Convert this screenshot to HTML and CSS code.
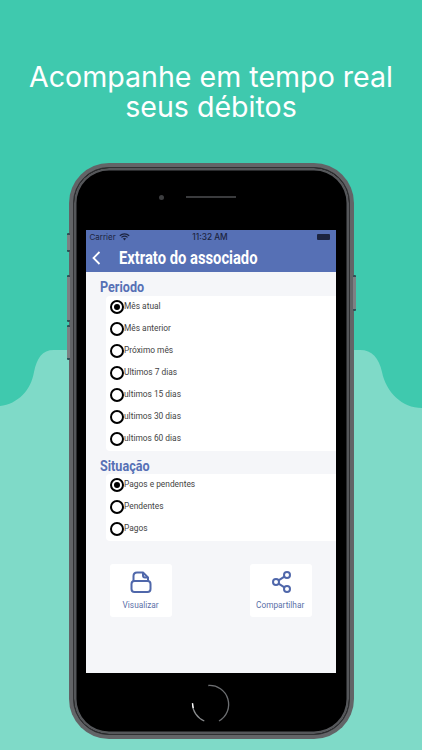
FILE: index.html
```html
<!DOCTYPE html>
<html lang="pt">
<head>
  <meta charset="utf-8">
  <title>Extrato do associado</title>
  <link rel="stylesheet" href="styles.css">
</head>
<body>
  <div class="page">
    <!-- fundo com a onda -->
    <svg class="wave" width="422" height="750" viewBox="0 0 422 750">
      <path fill="#7fdac8" d="M0 406C18 404 31 390 34 372C37 358 42 350 54 350L360 350C372 350 379 358 382 372C386 392 402 408 422 408L422 750L0 750Z"/>
    </svg>

    <h1 class="headline">Acompanhe em tempo real<br>seus débitos</h1>

    <div class="phone">
      <span class="side side-a"></span>
      <span class="side side-b"></span>
      <span class="side side-c"></span>
      <span class="side side-d"></span>

      <div class="bezel">
        <div class="speaker-row">
          <span class="camera"></span>
          <span class="speaker"></span>
        </div>

        <div class="screen">
          <div class="statusbar">
            <span class="carrier">Carrier
              <svg width="11" height="8" viewBox="0 0 11 8"><path fill="none" stroke="#1c2440" stroke-width="1.2" d="M.8 2.8C3.500.3 7.500.3 10.200 2.800M2.400 4.400C4.200 2.900 6.800 2.900 8.600 4.400"/><path fill="#1c2440" d="M3.900 5.600C4.800 4.900 6.200 4.900 7.100 5.600L5.500 7.500Z"/></svg>
            </span>
            <span class="clock">11:32 AM</span>
            <span class="battery"></span>
          </div>
          <div class="navbar">
            <svg class="back" width="9" height="14" viewBox="0 0 9 14"><path fill="none" stroke="#fff" stroke-width="1.8" d="M7.500 1L1.500 7L7.500 13"/></svg>
            <span class="title">Extrato do associado</span>
          </div>

          <div class="section-title">Periodo</div>
          <ul class="options">
            <li class="checked"><i class="radio"></i><span>Mês atual</span></li>
            <li><i class="radio"></i><span>Mês anterior</span></li>
            <li><i class="radio"></i><span>Próximo mês</span></li>
            <li><i class="radio"></i><span>Ultimos 7 dias</span></li>
            <li><i class="radio"></i><span>ultimos 15 dias</span></li>
            <li><i class="radio"></i><span>ultimos 30 dias</span></li>
            <li><i class="radio"></i><span>ultimos 60 dias</span></li>
          </ul>

          <div class="section-title">Situação</div>
          <ul class="options">
            <li class="checked"><i class="radio"></i><span>Pagos e pendentes</span></li>
            <li><i class="radio"></i><span>Pendentes</span></li>
            <li><i class="radio"></i><span>Pagos</span></li>
          </ul>

          <div class="actions">
            <div class="action">
              <svg width="22" height="22" viewBox="0 0 22 22" fill="none" stroke="#4f67aa" stroke-width="2" stroke-linejoin="round"><path d="M3.500 10V5Q3.500 1.500 7 1.500H13L18 6.500V10"/><path d="M13 1.500V4.500Q13 6.500 15 6.500H18"/><rect x="1.500" y="10" width="19" height="11" rx="3"/></svg>
              <span>Visualizar</span>
            </div>
            <div class="action">
              <svg width="22" height="22" viewBox="0 0 22 22" fill="none" stroke="#4f67aa" stroke-width="2"><circle cx="17" cy="4" r="3"/><circle cx="6" cy="11" r="3"/><circle cx="17" cy="18" r="3"/><path d="M8.600 9.400L14.400 5.700M8.600 12.600L14.400 16.300"/></svg>
              <span>Compartilhar</span>
            </div>
          </div>
        </div>

        <div class="home-row">
          <svg width="44" height="44" viewBox="0 0 44 44" fill="none" stroke-width="1.300">
            <path stroke="#6d6f72" d="M19.300 3.500A19 19 0 0 1 30 39"/>
            <path stroke="#8a8c8e" d="M3.500 21.300A19 19 0 0 0 15.300 39"/>
            <path stroke="#fff" d="M3.500 21.300A19 19 0 0 0 4.300 26"/>
          </svg>
        </div>
      </div>
    </div>
  </div>
</body>
</html>
```
FILE: styles.css
```css
* {
  margin: 0;
  padding: 0;
  box-sizing: border-box;
}

body {
  background-color: #3fc9ae;
  font-family: "Roboto", sans-serif;
}

.page {
  position: relative;
  width: 422px;
  height: 750px;
  overflow: hidden;
  padding-top: 62px;
}

.wave {
  position: absolute;
  left: 0;
  top: 0;
}

/* Titulo */

.headline {
  position: relative;
  color: #fff;
  font-family: "Inter", sans-serif;
  font-size: 28.600px;
  font-weight: 400;
  line-height: 30px;
  text-align: center;
}

/* Aparelho */

.phone {
  position: relative;
  width: 285px;
  height: 576px;
  margin: 41px 0 0 69px;
  padding: 4px;
  background-color: #626467;
  border-radius: 40px;
}

.side {
  position: absolute;
  width: 3px;
  background-color: #7d8083;
  border-top: 2px solid #2f4f55;
  border-bottom: 2px solid #2f4f55;
  border-radius: 1px;
}

.side-a { left: -2px; top: 70px; height: 19px; }
.side-b { left: -2px; top: 112px; height: 47px; }
.side-c { left: -2px; top: 162px; height: 35px; }
.side-d { right: -2px; top: 112px; height: 36px; }

.bezel {
  height: 568px;
  padding: 0 11.500px;
  background-color: #000;
  border: 1.500px solid #2f3032;
  border-radius: 36px;
  box-shadow: inset 0 0 0 2.500px #55575a;
}

.speaker-row {
  display: flex;
  align-items: center;
  gap: 22px;
  height: 61.500px;
  padding: 0 0 3px 73px;
}

.camera {
  width: 5px;
  height: 5px;
  background-color: #3c3d3f;
  border-radius: 50%;
}

.speaker {
  width: 50px;
  height: 2px;
  background-color: #3a3b3d;
}

/* Tela */

.screen {
  width: 250px;
  height: 443px;
  background-color: #f5f6f9;
}

.statusbar {
  display: flex;
  align-items: center;
  justify-content: space-between;
  height: 14px;
  padding: 0 5px 0 4px;
  background-color: #5670b5;
  color: #1c2440;
  font-family: "Inter", sans-serif;
  font-size: 8px;
}

.carrier {
  display: flex;
  align-items: center;
  gap: 3px;
  width: 60px;
}

.clock {
  font-size: 8.300px;
  font-weight: 500;
}

.battery {
  display: block;
  width: 13px;
  height: 6px;
  margin-left: 47px;
  background-color: #1c2440;
  border-radius: 1px;
}

.navbar {
  display: flex;
  align-items: center;
  gap: 18px;
  height: 28px;
  padding-left: 6px;
  background-color: #5670b5;
}

.back {
  flex-shrink: 0;
}

.title {
  color: #fff;
  font-size: 18px;
  font-weight: 700;
  white-space: nowrap;
  transform: scaleX(.82);
  transform-origin: left center;
}

.section-title {
  height: 24px;
  margin-left: 14px;
  color: #5670b5;
  font-size: 15px;
  font-weight: 700;
  line-height: 30px;
  transform: scaleX(.84);
  transform-origin: left center;
}

.options + .section-title {
  height: 23px;
}

.options {
  margin-left: 20px;
  padding-bottom: 1px;
  list-style: none;
  background-color: #fff;
  border-radius: 4px 0 0 4px;
}

.options li {
  display: flex;
  align-items: flex-start;
  height: 22px;
  padding: 4px 0 0 4px;
  color: #444;
  font-size: 9.500px;
}

.options li span {
  line-height: 11px;
  white-space: nowrap;
  transform: scaleX(.88);
  transform-origin: left center;
}

.radio {
  flex-shrink: 0;
  width: 14px;
  height: 14px;
  border: 2px solid #000;
  border-radius: 50%;
}

.checked .radio {
  padding: 2px;
  background-color: #000;
  background-clip: content-box;
}

/* Botoes */

.actions {
  display: flex;
  justify-content: space-between;
  margin: 23px 24px 0;
}

.action {
  display: flex;
  flex-direction: column;
  align-items: center;
  width: 62px;
  height: 53px;
  padding-top: 7px;
  background-color: #fff;
  border-radius: 3px;
  color: #5a6fa8;
  font-size: 9px;
}

.action span {
  margin-top: 7px;
  white-space: nowrap;
  transform: scaleX(.92);
}

.home-row {
  display: flex;
  justify-content: center;
  width: 250px;
  padding-top: 9px;
}
```
